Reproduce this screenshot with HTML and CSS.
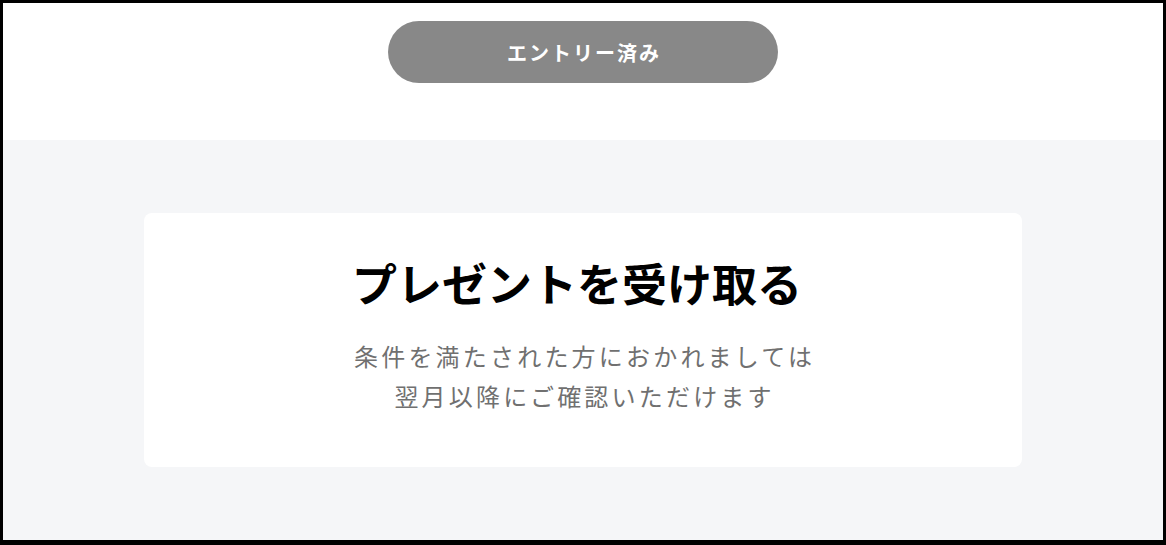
FILE: index.html
```html
<!DOCTYPE html>
<html lang="ja">
<head>
<meta charset="utf-8">
<title>プレゼントを受け取る</title>
<link rel="stylesheet" href="styles.css">
</head>
<body>
<div class="frame">
  <section class="entry">
    <button class="entry-button" type="button" disabled>エントリー済み</button>
  </section>
  <section class="present">
    <div class="present-card">
      <h2 class="present-title">プレゼントを受け取る</h2>
      <p class="present-text">条件を満たされた方におかれましては<br>翌月以降にご確認いただけます</p>
    </div>
  </section>
</div>
</body>
</html>
```

FILE: styles.css
```css
* {
  box-sizing: border-box;
}

html,
body {
  margin: 0;
  padding: 0;
  height: 100%;
}

body {
  font-family: "Noto Sans CJK JP", "Noto Sans", sans-serif;
  background: #000;
}

.frame {
  height: 545px;
  border: 3px solid #000;
  border-bottom-width: 5px;
  display: flex;
  flex-direction: column;
  background: #fff;
}

.entry {
  height: 137px;
  flex: none;
  display: flex;
  justify-content: center;
  padding-top: 18px;
  background: #fff;
}

.entry-button {
  width: 390px;
  height: 62px;
  border: none;
  border-radius: 31px;
  background: #888888;
  color: #fff;
  font-family: inherit;
  font-size: 20px;
  font-weight: 700;
  letter-spacing: 0.1em;
  padding: 0 0 0 0.1em;
  cursor: default;
}

.present {
  flex: 1;
  background: #f5f6f8;
  padding: 73px 141px;
}

.present-card {
  height: 254px;
  background: #fff;
  border-radius: 8px;
  padding-top: 41px;
  display: flex;
  flex-direction: column;
  align-items: center;
  text-align: center;
}

.present-title {
  margin: 0;
  font-size: 45px;
  line-height: 57px;
  font-weight: 700;
  color: #000;
  letter-spacing: 0;
  padding-right: 12px;
}

.present-text {
  margin: 25px 0 0;
  font-size: 24px;
  line-height: 40px;
  font-weight: 400;
  color: #707070;
  letter-spacing: 3.2px;
  padding-left: 3.2px;
}
```
